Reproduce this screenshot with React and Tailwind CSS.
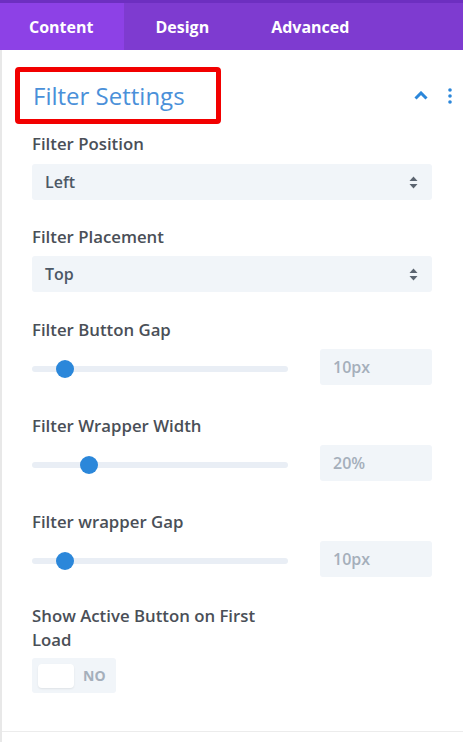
import React from "react";

function Label({ children, className = "" }) {
  return (
    <div className={"text-[16.8px] leading-[24px] font-semibold text-[#4a4f57] " + className}>
      {children}
    </div>
  );
}

function SelectBox({ value }) {
  return (
    <div className="h-[36px] w-[400px] rounded-[3px] bg-[#f1f5f9] flex items-center justify-between pl-[13px] pr-[14px]">
      <span className="text-[16px] font-semibold text-[#4c5866]">{value}</span>
      <svg width="9" height="13" viewBox="0 0 9 13">
        <path d="M4.5 0.5 L8.5 5 L0.5 5 Z" fill="#5b6470" />
        <path d="M4.5 12.5 L8.5 8 L0.5 8 Z" fill="#5b6470" />
      </svg>
    </div>
  );
}

function Slider({ knob, value }) {
  return (
    <div className="flex items-center">
      <div className="relative mt-[4px] w-[256px] h-[6px] rounded-full bg-[#e9eef5]">
        <div
          className="absolute top-1/2 w-[18px] h-[18px] -mt-[9px] -ml-[9px] rounded-full bg-[#2b87da]"
          style={{ left: knob }}
        />
      </div>
      <div className="ml-[32px] h-[36px] w-[112px] rounded-[3px] bg-[#f1f5f9] flex items-center pl-[13px]">
        <span className="text-[16px] font-semibold text-[#a5afbb]">{value}</span>
      </div>
    </div>
  );
}

export default function App() {
  return (
    <div
      className="w-[463px] h-[742px] bg-white overflow-hidden flex flex-col"
      style={{ fontFamily: '"Open Sans", sans-serif' }}
    >
      <div className="h-[50px] bg-[#7e3bd0] border-t-[3px] border-[#6d2fc0] flex text-white text-[16px] font-bold">
        <div className="bg-[#8d41e6] pl-[29px] pr-[31px] flex items-center">Content</div>
        <div className="px-[31px] flex items-center">Design</div>
        <div className="px-[31px] flex items-center">Advanced</div>
      </div>
      <div className="flex-1 border-l-2 border-[#e8e8e8] flex flex-col">
        <div className="flex items-center justify-between pl-[13px] pr-[10px] pt-[17px]">
          <div className="w-[206px] h-[57px] border-[5px] border-[#f20000] rounded-[4px] flex items-center pl-[13px]">
            <span className="text-[24px] text-[#4a90d9] leading-none">Filter Settings</span>
          </div>
          <div className="flex items-center gap-[20px] pr-[1px]">
            <svg width="14" height="9" viewBox="0 0 14 9">
              <path d="M1.5 7.5 L7 2 L12.5 7.5" stroke="#2b87da" strokeWidth="3" fill="none" />
            </svg>
            <svg width="4" height="16" viewBox="0 0 4 16">
              <circle cx="2" cy="2" r="1.8" fill="#2b87da" />
              <circle cx="2" cy="8" r="1.8" fill="#2b87da" />
              <circle cx="2" cy="14" r="1.8" fill="#2b87da" />
            </svg>
          </div>
        </div>

        <div className="pl-[30px] flex flex-col">
          <Label className="mt-[8px]">Filter Position</Label>
          <div className="mt-[8px]"><SelectBox value="Left" /></div>

          <Label className="mt-[25px]">Filter Placement</Label>
          <div className="mt-[7px]"><SelectBox value="Top" /></div>

          <Label className="mt-[26px]">Filter Button Gap</Label>
          <div className="mt-[7px]"><Slider knob={33} value="10px" /></div>

          <Label className="mt-[29px]">Filter Wrapper Width</Label>
          <div className="mt-[7px]"><Slider knob={57} value="20%" /></div>

          <Label className="mt-[29px]">Filter wrapper Gap</Label>
          <div className="mt-[7px]"><Slider knob={33} value="10px" /></div>

          <Label className="mt-[27px] w-[250px]">Show Active Button on First Load</Label>
          <div className="mt-[6px] w-[84px] h-[35px] rounded-[3px] bg-[#f1f5f9] flex items-center pl-[6px]">
            <div className="w-[36px] h-[24px] rounded-[4px] bg-white shadow-[0_1px_2px_rgba(0,0,0,0.08)]" />
            <span className="ml-[9px] text-[14px] font-bold text-[#a5afbb]">NO</span>
          </div>
        </div>

        <div className="mt-auto mb-[10px] h-[1px] bg-[#ececec]" />
      </div>
    </div>
  );
}
